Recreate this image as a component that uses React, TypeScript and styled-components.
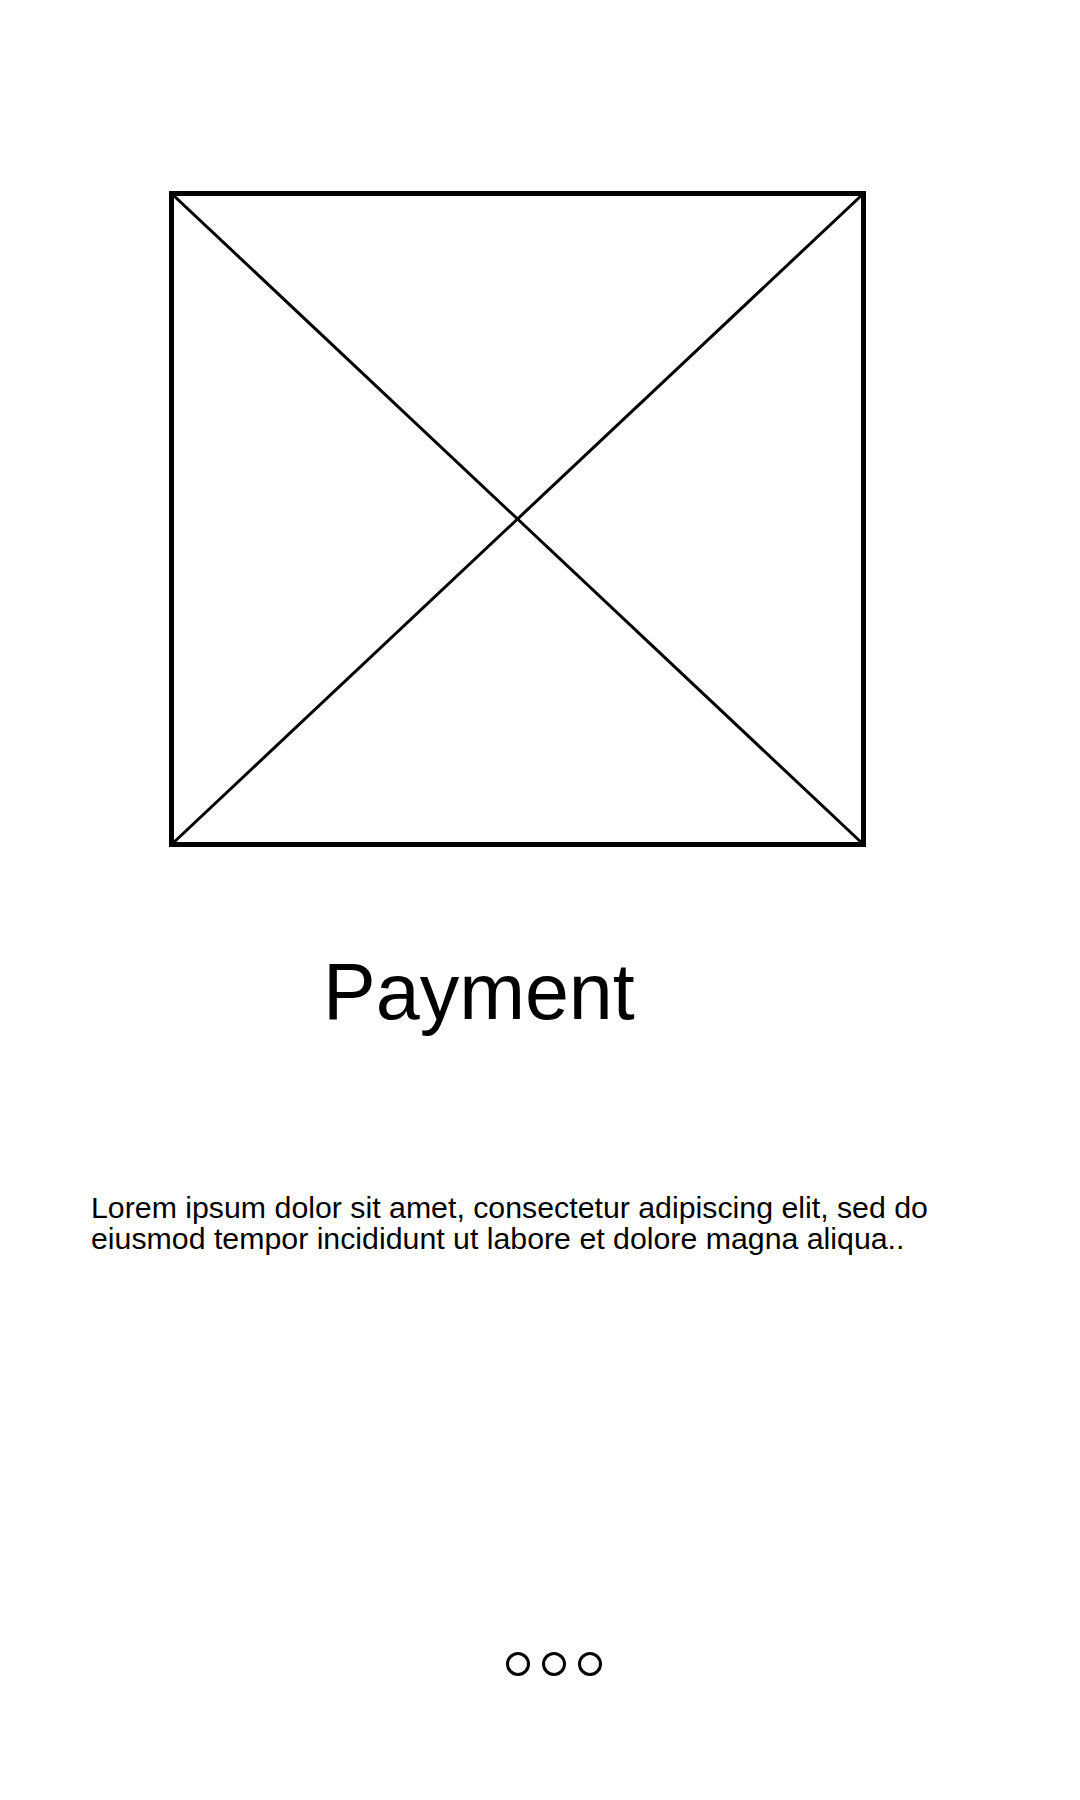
import React from "react";
import styled, { createGlobalStyle } from "styled-components";

const GlobalStyle = createGlobalStyle`
  html, body {
    margin: 0;
    padding: 0;
    background: #ffffff;
  }
  body {
    font-family: "Liberation Sans", Arial, sans-serif;
    color: #000000;
  }
`;

const Page = styled.main`
  width: 1080px;
  min-height: 1800px;
  display: flex;
  flex-direction: column;
  align-items: flex-start;
  padding-top: 191px;
  box-sizing: border-box;
  background: #ffffff;
`;

const Placeholder = styled.div`
  margin-left: 169px;
  width: 697px;
  height: 656px;
  display: flex;
`;

const Title = styled.h1`
  margin: 105px 0 0 0;
  padding-left: 323px;
  font-size: 79px;
  font-weight: 400;
  line-height: 1;
`;

const Body = styled.p`
  margin: 161px 0 0 0;
  padding-left: 91px;
  font-size: 30.3px;
  line-height: 31px;
  max-width: 900px;
`;

const Dots = styled.div`
  margin: 398px 0 0 506px;
  display: flex;
  gap: 12px;
`;

const Dot = styled.span<{ $active?: boolean }>`
  width: 24px;
  height: 24px;
  box-sizing: border-box;
  border: 3px solid #000;
  border-radius: 50%;
  background: ${(p) => (p.$active ? "#000" : "transparent")};
`;

const ImageIcon: React.FC = () => (
  <svg width="697" height="656" viewBox="0 0 697 656">
    <rect x="2.5" y="2.5" width="692" height="651" fill="none" stroke="#000" strokeWidth="5" />
    <line x1="3" y1="3" x2="694" y2="653" stroke="#000" strokeWidth="3" />
    <line x1="694" y1="3" x2="3" y2="653" stroke="#000" strokeWidth="3" />
  </svg>
);

export default function App() {
  return (
    <>
      <GlobalStyle />
      <Page>
        <Placeholder>
          <ImageIcon />
        </Placeholder>
        <Title>Payment</Title>
        <Body>
          Lorem ipsum dolor sit amet, consectetur adipiscing elit, sed do
          <br />
          eiusmod tempor incididunt ut labore et dolore magna aliqua..
        </Body>
        <Dots>
          <Dot />
          <Dot />
          <Dot />
        </Dots>
      </Page>
    </>
  );
}
